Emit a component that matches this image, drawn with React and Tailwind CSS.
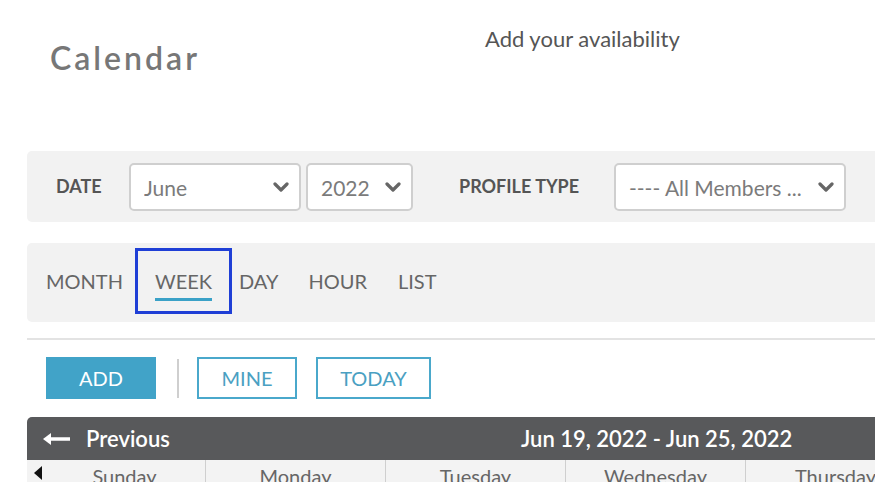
import React, { useState } from "react";

const days = ["Sunday", "Monday", "Tuesday", "Wednesday", "Thursday", "Friday", "Saturday"];

function Chevron() {
  return (
    <svg width="16" height="12" viewBox="0 0 16 12" className="shrink-0">
      <path d="M2 3 L8 9 L14 3" fill="none" stroke="#666" strokeWidth="3.2" strokeLinecap="round" strokeLinejoin="round" />
    </svg>
  );
}

function Select({ value, width }) {
  return (
    <div className={`flex items-center justify-between h-[48px] ${width} bg-white border-2 border-[#cfcfcf] rounded-[5px] pl-[13px] pr-[10px]`}>
      <span className="text-[21px] text-[#7b7b7b] truncate pt-[2px]">{value}</span>
      <Chevron />
    </div>
  );
}

const views = [
  { name: "MONTH", ml: "ml-0" },
  { name: "WEEK", ml: "ml-[12px]" },
  { name: "DAY", ml: "ml-[7px]" },
  { name: "HOUR", ml: "ml-[30px]" },
  { name: "LIST", ml: "ml-[31px]" },
];

export default function App() {
  const [view, setView] = useState("WEEK");

  return (
    <div className="w-[875px] h-[482px] overflow-hidden bg-white pl-[27px]" style={{ fontFamily: "Lato, 'Open Sans', sans-serif" }}>
      <div className="flex h-[116px]">
        <div className="w-[458px] pl-[23px] pt-[34px] text-[32px] font-semibold tracking-[3px] text-[#777]">Calendar</div>
        <div className="pt-[22px] text-[22px] text-[#555]">Add your availability</div>
      </div>

      <div className="mt-[35px] h-[71px] bg-[#f2f2f2] rounded-l-[5px] flex items-center">
        <span className="ml-[29px] w-[73px] text-[18px] font-bold text-[#555]">DATE</span>
        <Select value="June" width="w-[172px]" />
        <div className="w-[5px]" />
        <Select value="2022" width="w-[107px]" />
        <span className="ml-[46px] w-[155px] text-[18px] font-bold text-[#555]">PROFILE TYPE</span>
        <Select value="---- All Members ..." width="w-[232px]" />
      </div>

      <div className="mt-[21px] h-[79px] bg-[#f2f2f2] rounded-l-[5px] flex items-start pt-[5px] pl-[19px]">
        {views.map(({ name, ml }) => (
          <button
            key={name}
            onClick={() => setView(name)}
            className={
              name === "WEEK"
                ? `${ml} h-[66px] px-[17px] pt-[10px] border-[3px] border-[#1f3fd6] flex flex-col items-center justify-center text-[20px] text-[#666]`
                : `${ml} h-[66px] flex items-center text-[20px] text-[#666]`
            }
          >
            <span className="leading-none">{name}</span>
            {name === view && <span className="mt-[7px] h-[3px] w-full bg-[#3aa1c7]" />}
          </button>
        ))}
      </div>

      <div className="mt-[16px] border-t-2 border-[#e3e3e3] flex items-center pt-[17px] pl-[19px]">
        <button className="w-[110px] h-[42px] bg-[#41a3c8] text-white text-[20px]">ADD</button>
        <span className="ml-[21px] mr-[18px] w-[2px] h-[39px] bg-[#cfcfcf]" />
        <button className="w-[100px] h-[42px] border-2 border-[#4aa8cb] text-[#4aa0c2] text-[20px]">MINE</button>
        <button className="ml-[19px] w-[115px] h-[42px] border-2 border-[#4aa8cb] text-[#4aa0c2] text-[20px]">TODAY</button>
      </div>

      <div className="mt-[18px] h-[43px] bg-[#58595b] rounded-tl-[5px] flex items-center text-white text-[22px] font-semibold">
        <div className="w-[494px] flex items-center pl-[15px]">
          <svg width="30" height="14" viewBox="0 0 30 14">
            <path d="M28 7 H6" stroke="white" strokeWidth="3.5" />
            <path d="M1 7 L9 1 V13 Z" fill="white" />
          </svg>
          <span className="ml-[14px]">Previous</span>
        </div>
        <span>Jun 19, 2022 - Jun 25, 2022</span>
      </div>

      <div className="flex bg-[#f3f3f3] h-[30px] w-[1300px]">
        <div className="relative shrink-0 w-[17px]">
          <svg width="8" height="14" viewBox="0 0 8 14" className="absolute left-[7px] top-[6px]">
            <path d="M8 0 L0 7 L8 14 Z" fill="#111" />
          </svg>
        </div>
        {days.map((d, i) => (
          <div key={d} className={`shrink-0 ${i === 0 ? "w-[161px]" : "w-[180px] border-l border-[#cfcfcf]"} text-center text-[20px] text-[#666] pt-[1px]`}>
            {d}
          </div>
        ))}
      </div>
    </div>
  );
}
